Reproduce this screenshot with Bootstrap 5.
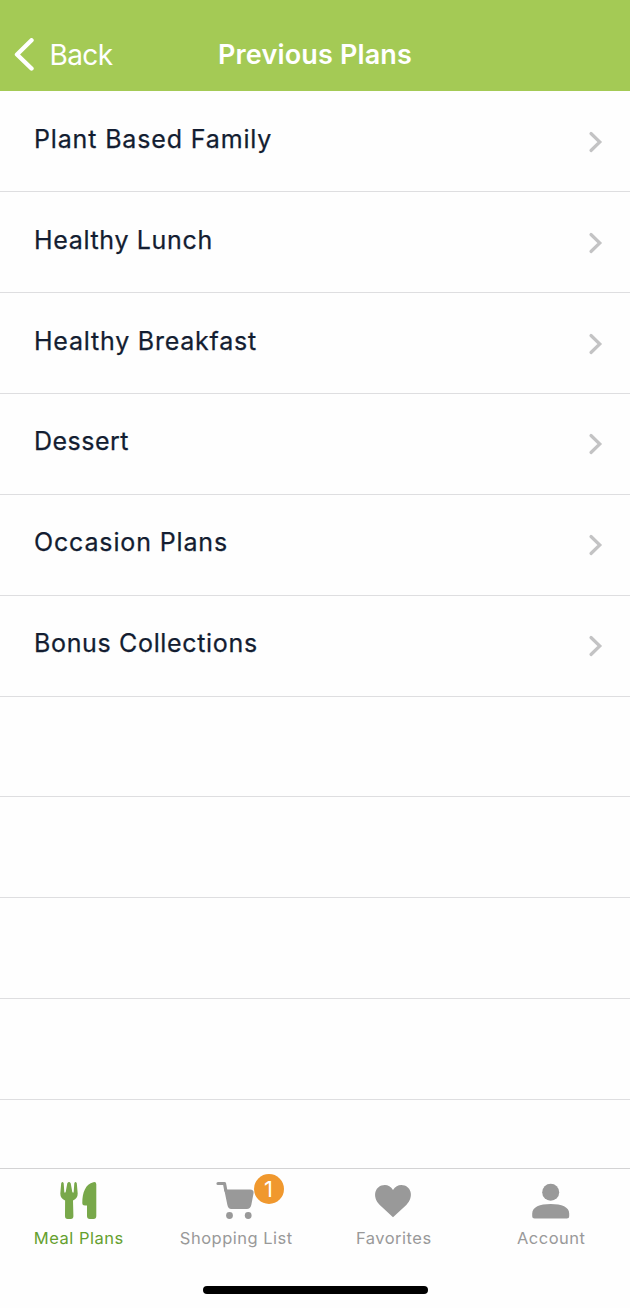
<!DOCTYPE html>
<html lang="en">
<head>
<meta charset="utf-8">
<meta name="viewport" content="width=device-width, initial-scale=1">
<title>Previous Plans</title>
<link rel="stylesheet" href="https://cdn.jsdelivr.net/npm/bootstrap@5.3.0/dist/css/bootstrap.min.css">
<style>
  body { font-family: Inter, "Liberation Sans", sans-serif; background: #fefefe; height: 1308px; }
  .top-bar { height: 91px; background: #a4ca55; padding: 18px 0 0 14px; --bs-navbar-padding-y: 0; }
  .back-link { font-size: 28px; line-height: 34px; letter-spacing: -.6px; gap: 14.5px; }
  .page-title { font-size: 27px; line-height: 34px; font-weight: 600; letter-spacing: .15px; }
  .plan-list { min-height: 0; overflow: hidden; padding-top: .4px; }
  .plan-row { flex: 0 0 100.87px; border: 0; border-bottom: 1px solid #dedee0; background: transparent; padding: 1px 27px 0 34px; color: #131d31; }
  .plan-name { font-size: 25px; line-height: 30px; margin-bottom: 6px; font-weight: 400; letter-spacing: .78px; -webkit-text-stroke: .25px #131d31; }
  .fit-wide { letter-spacing: .85px; }
  .fit-snug { letter-spacing: .66px; }
  .fit-tight { letter-spacing: .48px; }
  .tabs { height: 140px; border-top: 1px solid #d3d3d4; padding-top: 9px; }
  .tab { width: 157.5px; color: #999; font-size: 16.5px; line-height: 20px; letter-spacing: .5px; }
  .tab.active { color: #65a02e; }
  .tab svg { display: block; margin-bottom: 4px; margin-right: 1px; }
  .tab.active svg { margin-right: 0; }
  .count { left: 96px; top: -4.5px; width: 30px; height: 30px; background: #f0982e; font-size: 22px; letter-spacing: 0; }
  .home-bar { width: 225px; height: 8px; border-radius: 4px; background: #000; margin-top: auto; margin-bottom: 14px; }
</style>
</head>
<body class="d-flex flex-column overflow-hidden">
<nav class="navbar top-bar flex-shrink-0 position-relative">
  <a class="back-link d-flex align-items-center text-white text-decoration-none" href="#">
    <svg width="21" height="34" viewBox="0 0 21 34" fill="none" stroke="#fff" stroke-width="4.4" stroke-linecap="round" stroke-linejoin="round"><path d="M17.500 2.300 3 16.500 17.500 30.500"/></svg>
    <span>Back</span>
  </a>
  <h1 class="page-title text-white text-center m-0 position-absolute start-0 end-0 pe-none">Previous Plans</h1>
</nav>
<main class="list-group list-group-flush plan-list flex-grow-1 rounded-0">
  <a href="#" class="plan-row list-group-item d-flex align-items-center justify-content-between"><span class="plan-name fit-wide">Plant Based Family</span><svg width="15" height="22" viewBox="0 0 15 22" fill="none" stroke="#c3c3c4" stroke-width="3.2" stroke-linecap="round"><path d="m3 2.500 8.800 8.500L3 19.500"/></svg></a>
  <a href="#" class="plan-row list-group-item d-flex align-items-center justify-content-between"><span class="plan-name fit-snug">Healthy Lunch</span><svg width="15" height="22" viewBox="0 0 15 22" fill="none" stroke="#c3c3c4" stroke-width="3.2" stroke-linecap="round"><path d="m3 2.500 8.800 8.500L3 19.500"/></svg></a>
  <a href="#" class="plan-row list-group-item d-flex align-items-center justify-content-between"><span class="plan-name">Healthy Breakfast</span><svg width="15" height="22" viewBox="0 0 15 22" fill="none" stroke="#c3c3c4" stroke-width="3.2" stroke-linecap="round"><path d="m3 2.500 8.800 8.500L3 19.500"/></svg></a>
  <a href="#" class="plan-row list-group-item d-flex align-items-center justify-content-between"><span class="plan-name fit-tight">Dessert</span><svg width="15" height="22" viewBox="0 0 15 22" fill="none" stroke="#c3c3c4" stroke-width="3.2" stroke-linecap="round"><path d="m3 2.500 8.800 8.500L3 19.500"/></svg></a>
  <a href="#" class="plan-row list-group-item d-flex align-items-center justify-content-between"><span class="plan-name fit-wide">Occasion Plans</span><svg width="15" height="22" viewBox="0 0 15 22" fill="none" stroke="#c3c3c4" stroke-width="3.2" stroke-linecap="round"><path d="m3 2.500 8.800 8.500L3 19.500"/></svg></a>
  <a href="#" class="plan-row list-group-item d-flex align-items-center justify-content-between"><span class="plan-name fit-snug">Bonus Collections</span><svg width="15" height="22" viewBox="0 0 15 22" fill="none" stroke="#c3c3c4" stroke-width="3.2" stroke-linecap="round"><path d="m3 2.500 8.800 8.500L3 19.500"/></svg></a>
  <div class="plan-row"></div>
  <div class="plan-row"></div>
  <div class="plan-row"></div>
  <div class="plan-row"></div>
</main>
<footer class="tabs d-flex flex-column align-items-center flex-shrink-0">
  <div class="d-flex w-100">
    <div class="tab active d-flex flex-column align-items-center">
      <svg width="44" height="46" viewBox="0 0 44 46" fill="#78a84a"><path d="M4.200 5.200Q5.500 3 6.700 5.200L7.300 14q.5 1.600 1.400 0L10.300 5.200q1.700-2.200 3.400 0L15.300 14q.9 1.600 1.400 0L17.300 5.200q1.200-2.200 2.500 0L20.700 15.500q0 5-4.700 7L16.400 38q0 3-2.600 3h-3.100q-2.800 0-2.700-3L8.100 22.500Q3.300 20.500 3.300 15.500Z"/><path d="M36.400 4.200q2.900-.5 2.900 2V38q0 3-2.800 3h-3.700q-2.800 0-2.800-3V27.500h-2q-2.700 0-2.700-2.500C25.300 14.500 28.500 6 36.400 4.200Z"/></svg>
      <span>Meal Plans</span>
    </div>
    <div class="tab d-flex flex-column align-items-center position-relative">
      <svg width="44" height="46" viewBox="0 0 44 46" fill="#999"><path d="M4 5.500H10.500l1.300 7" fill="none" stroke="#999" stroke-width="3.200" stroke-linecap="round" stroke-linejoin="round"/><path d="M10.200 11.500H36q4 0 3.600 3.500l-2.300 12q-1 4-4.500 4H17.200q-3 0-3.800-4Z"/><circle cx="15.500" cy="37.500" r="3.400"/><circle cx="34.200" cy="37.500" r="3.400"/></svg>
      <span>Shopping List</span>
      <span class="count position-absolute rounded-circle text-white d-flex align-items-center justify-content-center">1</span>
    </div>
    <div class="tab d-flex flex-column align-items-center">
      <svg width="44" height="46" viewBox="0 0 44 46" fill="#999"><path d="M22 39.300 8.800 27C.3 18.500 4.300 7 13.800 7q5 0 8.200 5Q25.300 7 30.300 7c9.500 0 13.500 11.500 5 20Z"/></svg>
      <span>Favorites</span>
    </div>
    <div class="tab d-flex flex-column align-items-center">
      <svg width="44" height="46" viewBox="0 0 44 46" fill="#999"><circle cx="21.700" cy="14.200" r="8.500"/><path d="M3.200 35.500C3.200 29 10.700 26 21.700 26s18.500 3 18.500 9.500V38q0 2.500-2.500 2.500H5.700q-2.500 0-2.500-2.500Z"/></svg>
      <span>Account</span>
    </div>
  </div>
  <div class="home-bar"></div>
</footer>
<script src="https://cdn.jsdelivr.net/npm/bootstrap@5.3.0/dist/js/bootstrap.bundle.min.js"></script>
</body>
</html>
